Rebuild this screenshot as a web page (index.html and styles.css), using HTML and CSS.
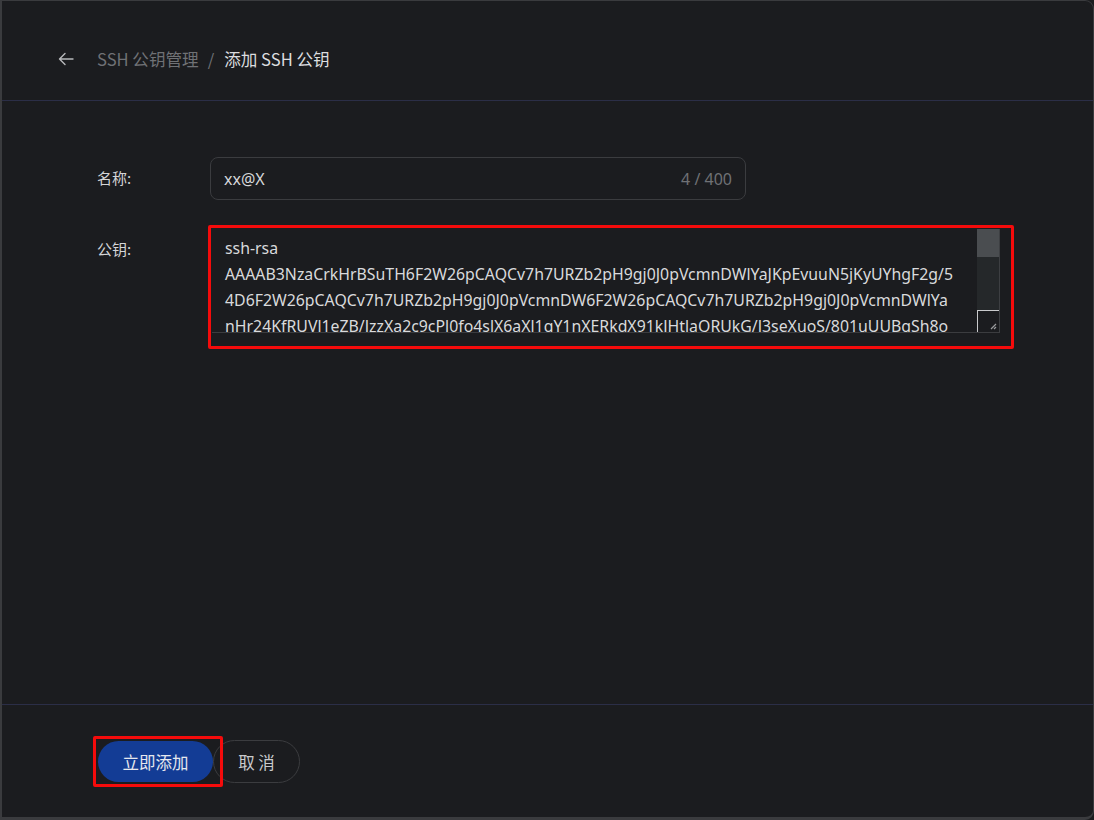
FILE: index.html
```html
<!DOCTYPE html>
<html lang="zh-CN">
<head>
<meta charset="utf-8">
<title>添加 SSH 公钥</title>
<link rel="stylesheet" href="styles.css">
</head>
<body>
<div class="frame">
  <div class="side-mark"></div>
  <header class="header">
    <span class="back">
      <svg width="18" height="18" viewBox="0 0 18 18" fill="none" stroke="#b8b9bc" stroke-width="1.4" stroke-linecap="round" stroke-linejoin="round"><path d="M16 9H2.5M8 3.5L2.5 9L8 14.5"/></svg>
    </span>
    <nav class="crumbs">
      <span class="crumb-link">SSH 公钥管理</span>
      <span class="crumb-sep">/</span>
      <span class="crumb-current">添加 SSH 公钥</span>
    </nav>
  </header>
  <main class="main">
    <div class="row row-name">
      <label class="label">名称:</label>
      <div class="input">
        <span class="input-value">xx@X</span>
        <span class="input-count">4 / 400</span>
      </div>
    </div>
    <div class="row row-key">
      <label class="label label-key">公钥:</label>
      <div class="highlight">
        <div class="textarea">
          <div class="textarea-text">ssh-rsa<br>AAAAB3NzaCrkHrBSuTH6F2W26pCAQCv7h7URZb2pH9gj0J0pVcmnDWlYaJKpEvuuN5jKyUYhgF2g/5<br>4D6F2W26pCAQCv7h7URZb2pH9gj0J0pVcmnDW6F2W26pCAQCv7h7URZb2pH9gj0J0pVcmnDWlYa<br>nHr24KfRUVl1eZB/JzzXa2c9cPl0fo4slX6aXl1gY1nXERkdX91kJHtlaQRUkG/J3seXuoS/801uUUBgSh8o</div>
          <div class="scrollbar">
            <div class="thumb"></div>
            <div class="track"></div>
            <div class="corner">
              <svg width="8" height="8" viewBox="0 0 8 8" stroke="#9a9b9d" stroke-width="1.2"><path d="M7 2L2 7M7 5L5 7"/></svg>
            </div>
          </div>
        </div>
      </div>
    </div>
  </main>
  <footer class="footer">
    <div class="actions">
      <div class="highlight-btn">
        <button class="btn btn-primary">立即添加</button>
      </div>
      <button class="btn btn-ghost">取 消</button>
    </div>
  </footer>
</div>
</body>
</html>
```
FILE: styles.css
```css
* { box-sizing: border-box; }
html, body {
  margin: 0;
  height: 100%;
  background: #1b1c1f;
}
body {
  font-family: "Segoe UI", "Noto Sans", "Noto Sans CJK SC", sans-serif;
  color: #d6d7d9;
  font-size: 16px;
}
.frame {
  position: relative;
  height: 820px;
  border: 1px solid #3a3b3e;
  border-left-width: 2px;
  border-bottom-width: 3px;
  border-radius: 0 9px 9px 0;
  display: flex;
  flex-direction: column;
  overflow: hidden;
}
.side-mark {
  position: absolute;
  left: -2px;
  top: 106px;
  width: 2px;
  height: 57px;
  background: #1a40a8;
}
.header {
  height: 100px;
  border-bottom: 1px solid #2b2e47;
  display: flex;
  align-items: center;
  padding: 16px 0 0 54px;
  flex: none;
}
.back {
  display: flex;
  width: 20px;
  height: 20px;
  align-items: center;
  justify-content: center;
  margin-right: 21px;
}
.crumbs {
  display: flex;
  align-items: center;
  font-size: 16.6px;
  font-family: "Noto Sans CJK SC", sans-serif;
}
.crumb-link { color: #6f7175; }
.crumb-sep { color: #6f7175; margin: 0 10px 0 9px; }
.crumb-current { color: #dcdddf; }
.main {
  flex: 1;
  padding: 56px 0 0 95px;
}
.row {
  display: flex;
}
.label {
  width: 113px;
  flex: none;
  font-family: "Noto Sans CJK SC", sans-serif;
  font-size: 15px;
  color: #d4d5d7;
}
.row-name {
  align-items: center;
  height: 43px;
}
.row-name .label { padding-bottom: 2px; }
.input {
  width: 536px;
  height: 43px;
  border: 1px solid #3b3c3f;
  border-radius: 8px;
  display: flex;
  align-items: center;
  justify-content: space-between;
  padding: 0 13px 0 13px;
}
.input-value {
  color: #d6d7d9;
  font-size: 16px;
}
.input-count {
  color: #6f7175;
  font-size: 16px;
}
.row-key {
  margin-top: 25px;
}
.label-key {
  padding-top: 13px;
}
.highlight {
  margin-left: -2px;
  width: 806px;
  height: 124px;
  border: 3px solid #f50b0b;
  border-radius: 2px;
  padding: 1px 11px 13px 1px;
}
.textarea {
  height: 104px;
  display: flex;
  border-bottom: 1px solid #3b3c3f;
}
.textarea-text {
  flex: 1;
  overflow: hidden;
  white-space: nowrap;
  padding: 6px 0 0 13px;
  line-height: 26px;
  font-size: 15.85px;
  color: #d9dadc;
}
.scrollbar {
  width: 23px;
  flex: none;
  display: flex;
  flex-direction: column;
  background: #25282a;
  border-right: 1px solid #3d3f42;
}
.thumb {
  height: 28px;
  background: #4a4d50;
}
.track { flex: 1; }
.corner {
  height: 22px;
  border-left: 1px solid #c9cacc;
  border-top: 1px solid #c9cacc;
  background: #1b1c1f;
  display: flex;
  align-items: flex-end;
  justify-content: flex-end;
  padding: 0 2px 2px 0;
}
.footer {
  height: 113px;
  flex: none;
  border-top: 1px solid #2b2e47;
  padding: 31px 0 0 91px;
}
.actions {
  display: flex;
  align-items: center;
}
.highlight-btn {
  border: 3px solid #f50b0b;
  border-radius: 2px;
  padding: 2px 7px 2px 2px;
  margin-right: -10px;
  position: relative;
  z-index: 1;
}
.btn {
  font-family: "Noto Sans CJK SC", sans-serif;
  font-size: 16.5px;
  border-radius: 22px;
  cursor: pointer;
}
.btn-primary {
  display: block;
  width: 115px;
  height: 41px;
  border: none;
  background: #133c95;
  color: #e6e8ee;
}
.btn-ghost {
  width: 87px;
  height: 43px;
  background: transparent;
  border: 1px solid #3b3c3f;
  color: #c9cacc;
  padding: 0;
}
```
